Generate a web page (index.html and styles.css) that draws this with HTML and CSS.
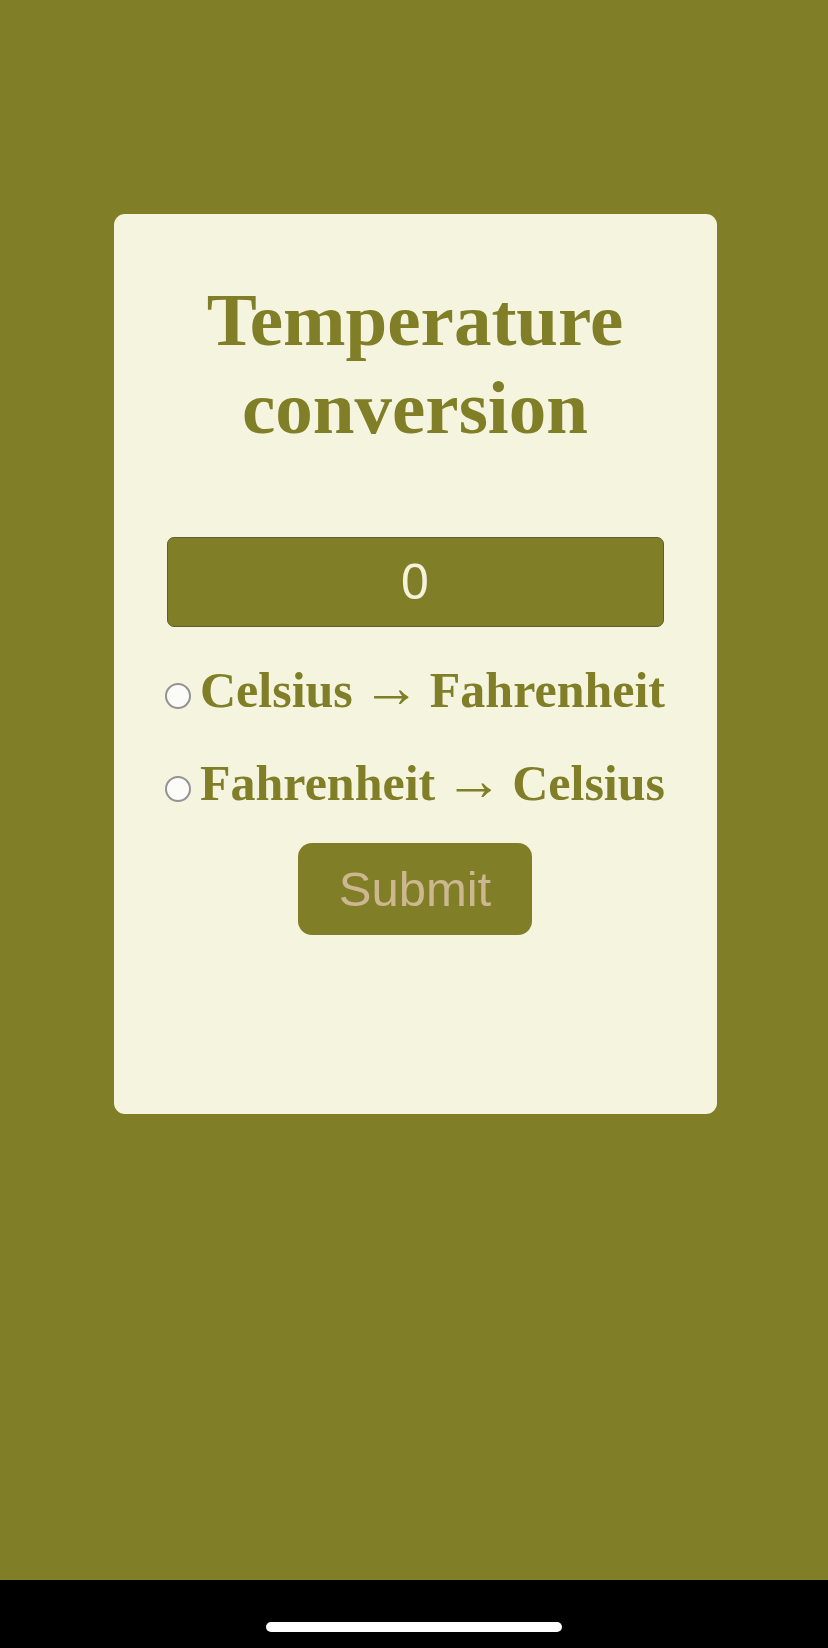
FILE: index.html
```html
<!DOCTYPE html>
<html lang="en">
<head>
<meta charset="utf-8">
<title>Temperature conversion</title>
<link rel="stylesheet" href="styles.css">
</head>
<body>
<div class="screen">
  <main class="stage">
    <form class="card">
      <h1 class="title">Temperature conversion</h1>
      <input class="value" type="text" value="0">
      <div class="options">
        <label class="option"><input class="radio" type="radio" name="mode"><span>Celsius <span class="arrow">→</span> Fahrenheit</span></label>
        <label class="option"><input class="radio" type="radio" name="mode"><span>Fahrenheit <span class="arrow">→</span> Celsius</span></label>
      </div>
      <button class="submit" type="button">Submit</button>
    </form>
  </main>
  <footer class="homebar"><span class="indicator"></span></footer>
</div>
</body>
</html>
```
FILE: styles.css
```css
html, body {
  margin: 0;
  padding: 0;
}
body {
  background: #807f27;
  font-family: "Liberation Serif", "Times New Roman", serif;
}
.screen {
  display: flex;
  flex-direction: column;
  height: 1648px;
}
.stage {
  flex: 1;
  display: flex;
  justify-content: center;
  align-items: flex-start;
  padding-top: 214px;
}
.card {
  box-sizing: border-box;
  width: 603px;
  height: 900px;
  margin-left: 2px;
  background: #f5f4df;
  border-radius: 11px;
  padding: 62px 53px 0;
  display: flex;
  flex-direction: column;
  align-items: center;
}
.title {
  margin: 0;
  font-size: 75px;
  line-height: 88px;
  font-weight: bold;
  color: #807f27;
  text-align: center;
}
.value {
  box-sizing: border-box;
  width: 100%;
  height: 90px;
  margin-top: 85px;
  background: #807f27;
  border: 1.5px solid #5e6029;
  border-radius: 7px;
  color: #f5f3dc;
  font-family: "Liberation Sans", Arial, sans-serif;
  font-size: 50px;
  text-align: center;
  padding: 0;
  outline: none;
}
.options {
  display: flex;
  flex-direction: column;
  align-items: center;
  gap: 36px;
  margin-top: 35px;
}
.option {
  display: block;
  font-size: 50px;
  line-height: 57px;
  font-weight: bold;
  color: #807f27;
  white-space: nowrap;
}
.arrow {
  font-size: 58px;
  line-height: 0;
  font-weight: normal;
  margin: 0 -3px;
}
.radio {
  appearance: none;
  -webkit-appearance: none;
  box-sizing: border-box;
  width: 26px;
  height: 26px;
  margin: 0 9px 0 0;
  border: 2px solid #939393;
  border-radius: 50%;
  background: #fbfbf8;
  vertical-align: -2px;
}
.submit {
  box-sizing: border-box;
  margin-top: 31px;
  height: 92px;
  padding: 0 41px;
  background: #807f27;
  border: none;
  border-radius: 14px;
  color: #cdb791;
  font-family: "Liberation Sans", Arial, sans-serif;
  font-size: 49px;
}
.homebar {
  height: 68px;
  background: #000;
  display: flex;
  justify-content: center;
  align-items: flex-start;
}
.indicator {
  width: 296px;
  height: 10px;
  margin-top: 42px;
  border-radius: 5px;
  background: #fff;
}
```
